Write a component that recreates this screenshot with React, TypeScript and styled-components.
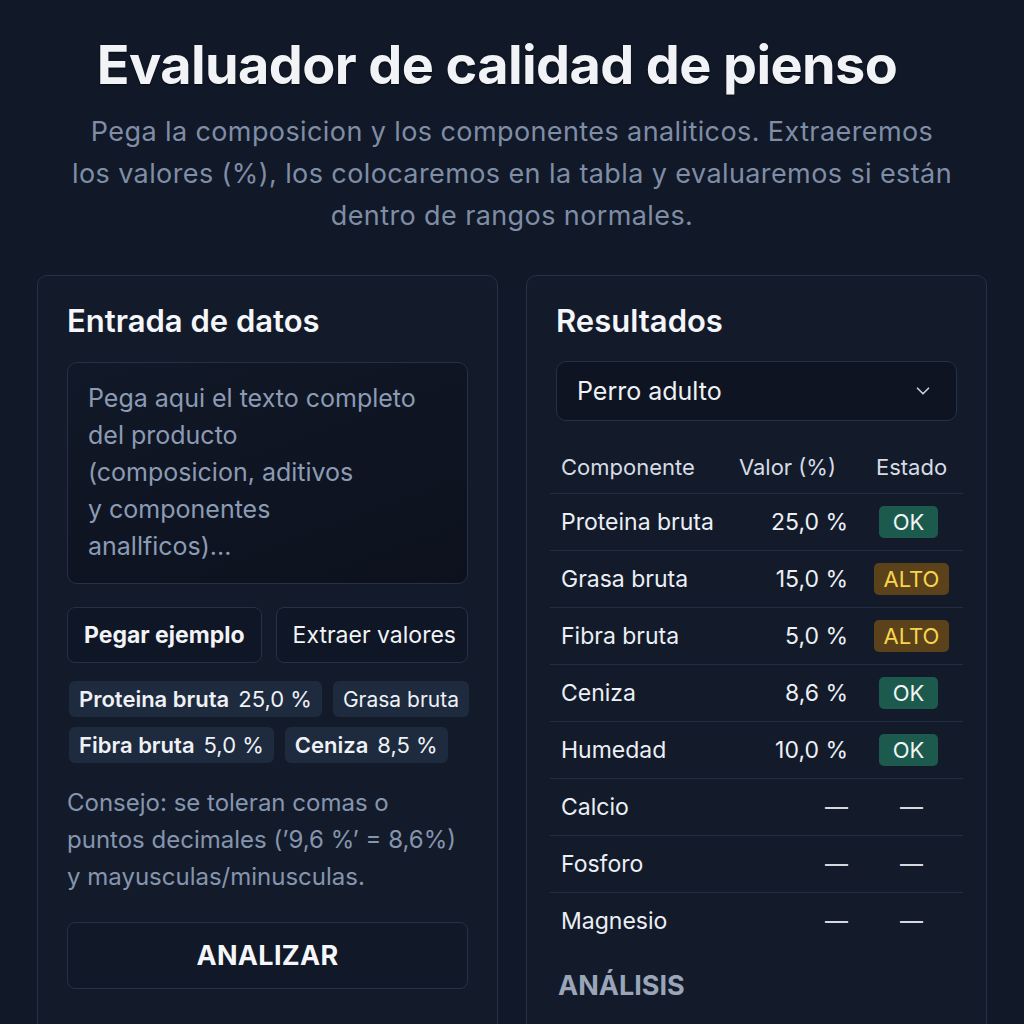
import React from 'react';
import styled, { createGlobalStyle } from 'styled-components';
import { ChevronDown } from 'lucide-react';

const GlobalStyle = createGlobalStyle`
  html, body {
    margin: 0;
    padding: 0;
    background: #111827;
    overflow: hidden;
  }
  body {
    font-family: Inter, "Noto Sans", "Liberation Sans", sans-serif;
    color: #e8ecf2;
  }
`;

const Page = styled.div`
  width: 950px;
  margin: 0 auto;
  padding-top: 32px;
  display: flex;
  flex-direction: column;
  align-items: center;
`;

const Title = styled.h1`
  margin: 0 30px 0 0;
  font-size: 54px;
  line-height: 66px;
  font-weight: 700;
  letter-spacing: -0.6px;
  color: #f1f3f6;
  text-shadow: 0 1px 2px rgba(0, 0, 0, 0.6);
`;

const Subtitle = styled.p`
  margin: 13px 0 0;
  text-align: center;
  font-size: 27px;
  line-height: 42px;
  letter-spacing: 0.4px;
  white-space: nowrap;
  color: #7f8da6;
`;

const Columns = styled.div`
  margin-top: 38px;
  width: 100%;
  display: grid;
  grid-template-columns: minmax(0, 1fr) minmax(0, 1fr);
  gap: 28px;
`;

const Card = styled.section`
  min-width: 0;
  background: #131b2b;
  border: 1px solid #243146;
  border-radius: 10px;
  padding: 27px 29px 33px;
  display: flex;
  flex-direction: column;
`;

const CardTitle = styled.h2`
  margin: 0;
  font-size: 31px;
  line-height: 36px;
  font-weight: 600;
  color: #f4f6f9;
`;

const TextBox = styled.textarea`
  margin-top: 23px;
  height: 222px;
  box-sizing: border-box;
  resize: none;
  background: linear-gradient(160deg, #111827 0%, #0c111d 100%);
  border: 1px solid #243146;
  border-radius: 10px;
  padding: 17px 20px;
  font-family: inherit;
  font-size: 25px;
  line-height: 37px;
  color: #e8ecf2;
  outline: none;
  &::placeholder {
    color: #8c9bb4;
  }
`;

const ButtonRow = styled.div`
  margin-top: 23px;
  display: flex;
  gap: 14px;
`;

const Button = styled.button<{ $strong?: boolean; $grow?: boolean }>`
  height: 56px;
  padding: 0 16px;
  flex: ${(p) => (p.$grow ? '1' : '0 0 auto')};
  min-width: 0;
  text-align: left;
  background: #0f1625;
  border: 1px solid #243146;
  border-radius: 8px;
  font-family: inherit;
  font-size: 23px;
  font-weight: ${(p) => (p.$strong ? 700 : 400)};
  color: #f1f3f6;
  white-space: nowrap;
  overflow: hidden;
`;

const Chips = styled.div`
  margin-top: 18px;
  display: flex;
  flex-direction: column;
  gap: 10px;
  padding-left: 2px;
`;

const ChipRow = styled.div`
  display: flex;
  gap: 11px;
`;

const Chip = styled.span<{ $small?: boolean }>`
  height: 36px;
  padding: 0 10px;
  display: inline-flex;
  align-items: center;
  gap: 9px;
  white-space: nowrap;
  background: #1e2a3d;
  border-radius: 6px;
  font-size: ${(p) => (p.$small ? '21px' : '22px')};
  color: #eef1f5;
`;

const ChipLabel = styled.span<{ $bold?: boolean }>`
  font-weight: ${(p) => (p.$bold ? 600 : 400)};
`;

const Tip = styled.p`
  margin: 21px 0 0;
  font-size: 24px;
  line-height: 37px;
  color: #8595ad;
`;

const BigButton = styled.button`
  margin-top: 27px;
  height: 67px;
  background: #111827;
  border: 1px solid #243146;
  border-radius: 8px;
  font-family: inherit;
  font-size: 27px;
  font-weight: 700;
  letter-spacing: 0.3px;
  color: #f4f6f9;
`;

const Select = styled.div`
  margin-top: 22px;
  height: 60px;
  box-sizing: border-box;
  padding: 0 22px 0 20px;
  display: flex;
  align-items: center;
  justify-content: space-between;
  background: #0e1421;
  border: 1px solid #243146;
  border-radius: 10px;
  font-size: 25px;
  color: #eef1f5;
`;

const Table = styled.div`
  margin: 19px -6px 0;
  display: flex;
  flex-direction: column;
`;

const Row = styled.div<{ $head?: boolean }>`
  display: grid;
  grid-template-columns: 1fr 130px 103px;
  align-items: center;
  height: ${(p) => (p.$head ? '53px' : '57px')};
  box-sizing: border-box;
  border-top: ${(p) => (p.$head ? 'none' : '1px solid #222f43')};
  font-size: ${(p) => (p.$head ? '22px' : '23px')};
  color: ${(p) => (p.$head ? '#d6dce5' : '#eceff4')};
`;

const Cell = styled.div<{ $align?: 'left' | 'right' | 'center' }>`
  padding: ${(p) => (p.$align === 'right' ? '0 12px 0 0' : p.$align === 'center' ? '0' : '0 0 0 11px')};
  display: flex;
  white-space: nowrap;
  justify-content: ${(p) =>
    p.$align === 'right' ? 'flex-end' : p.$align === 'center' ? 'center' : 'flex-start'};
`;

const HeadValue = styled(Cell)`
  padding-right: 24px;
`;

const Badge = styled.span<{ $kind: 'ok' | 'high' }>`
  display: inline-flex;
  align-items: center;
  justify-content: center;
  height: 32px;
  min-width: ${(p) => (p.$kind === 'ok' ? '59px' : '75px')};
  margin-left: ${(p) => (p.$kind === 'ok' ? '-6px' : '0')};
  box-sizing: border-box;
  border-radius: 5px;
  font-size: 22px;
  background: ${(p) => (p.$kind === 'ok' ? '#1d5a4e' : '#5b421b')};
  color: ${(p) => (p.$kind === 'ok' ? '#f1f5f4' : '#f6d54c')};
`;

const Dash = styled.span`
  color: #d4d9e1;
`;

const Section = styled.h3`
  margin: 20px 0 0 2px;
  font-size: 27px;
  line-height: 34px;
  font-weight: 700;
  color: #9aa6b8;
`;

type Status = 'ok' | 'high' | null;

const rows: { name: string; value: string | null; status: Status }[] = [
  { name: 'Proteina bruta', value: '25,0 %', status: 'ok' },
  { name: 'Grasa bruta', value: '15,0 %', status: 'high' },
  { name: 'Fibra bruta', value: '5,0 %', status: 'high' },
  { name: 'Ceniza', value: '8,6 %', status: 'ok' },
  { name: 'Humedad', value: '10,0 %', status: 'ok' },
  { name: 'Calcio', value: null, status: null },
  { name: 'Fosforo', value: null, status: null },
  { name: 'Magnesio', value: null, status: null },
];

const App: React.FC = () => {
  return (
    <>
      <GlobalStyle />
      <Page>
        <Title>Evaluador de calidad de pienso</Title>
        <Subtitle>
          Pega la composicion y los componentes analiticos. Extraeremos
          <br />
          los valores (%), los colocaremos en la tabla y evaluaremos si están
          <br />
          dentro de rangos normales.
        </Subtitle>

        <Columns>
          <Card>
            <CardTitle>Entrada de datos</CardTitle>
            <TextBox
              placeholder={
                'Pega aqui el texto completo\ndel producto\n(composicion, aditivos\ny componentes\nanallficos)...'
              }
            />
            <ButtonRow>
              <Button $strong>Pegar ejemplo</Button>
              <Button $grow>Extraer valores</Button>
            </ButtonRow>
            <Chips>
              <ChipRow>
                <Chip>
                  <ChipLabel $bold>Proteina bruta</ChipLabel>
                  <span>25,0 %</span>
                </Chip>
                <Chip $small>
                  <ChipLabel>Grasa bruta</ChipLabel>
                </Chip>
              </ChipRow>
              <ChipRow>
                <Chip>
                  <ChipLabel $bold>Fibra bruta</ChipLabel>
                  <span>5,0 %</span>
                </Chip>
                <Chip>
                  <ChipLabel $bold>Ceniza</ChipLabel>
                  <span>8,5 %</span>
                </Chip>
              </ChipRow>
            </Chips>
            <Tip>
              Consejo: se toleran comas o
              <br />
              puntos decimales (’9,6 %’ = 8,6%)
              <br />y mayusculas/minusculas.
            </Tip>
            <BigButton>ANALIZAR</BigButton>
          </Card>

          <Card>
            <CardTitle>Resultados</CardTitle>
            <Select>
              <span>Perro adulto</span>
              <ChevronDown size={22} strokeWidth={1.8} color="#c9d1dc" />
            </Select>
            <Table>
              <Row $head>
                <Cell>Componente</Cell>
                <HeadValue $align="right">Valor (%)</HeadValue>
                <Cell $align="center">Estado</Cell>
              </Row>
              {rows.map((r) => (
                <Row key={r.name}>
                  <Cell>{r.name}</Cell>
                  <Cell $align="right">{r.value ?? <Dash>—</Dash>}</Cell>
                  <Cell $align="center">
                    {r.status ? (
                      <Badge $kind={r.status}>{r.status === 'ok' ? 'OK' : 'ALTO'}</Badge>
                    ) : (
                      <Dash>—</Dash>
                    )}
                  </Cell>
                </Row>
              ))}
            </Table>
            <Section>ANÁLISIS</Section>
          </Card>
        </Columns>
      </Page>
    </>
  );
};

export default App;
